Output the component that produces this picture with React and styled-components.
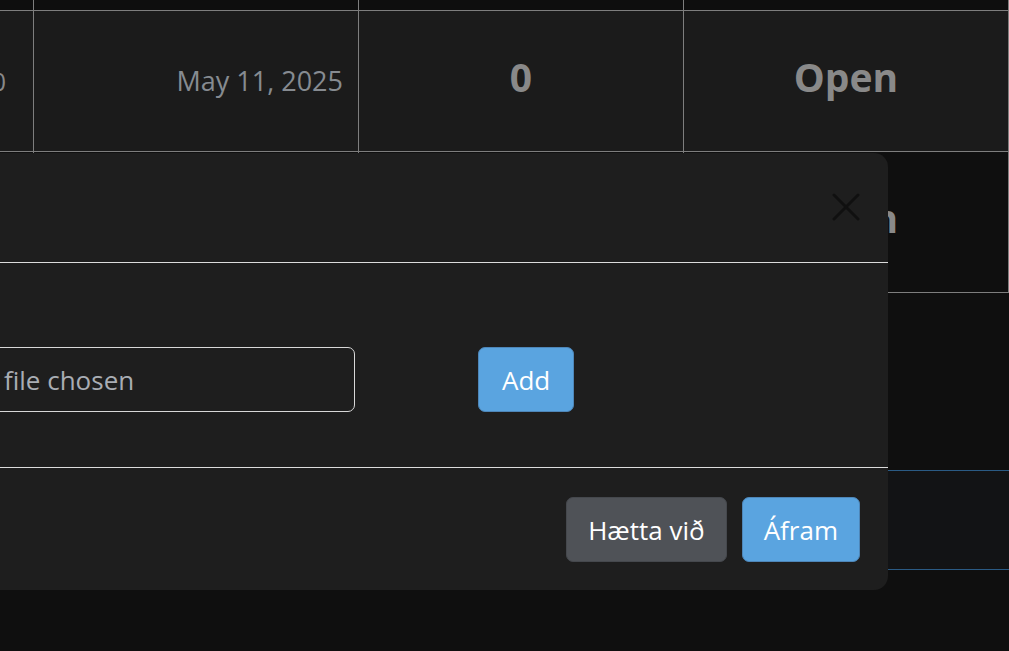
import React from "react";
import styled, { createGlobalStyle } from "styled-components";

const GlobalStyle = createGlobalStyle`
  html, body {
    margin: 0;
    padding: 0;
    background: #0f0f0f;
    overflow: hidden;
  }
  body {
    font-family: "Open Sans", "Noto Sans", "Liberation Sans", sans-serif;
  }
`;

const Page = styled.div`
  position: relative;
  width: 1009px;
  height: 651px;
  overflow: hidden;
  background: #0f0f0f;
`;

const Table = styled.table`
  border-collapse: collapse;
  margin-left: -292px;
  table-layout: fixed;
  width: 1620px;

  td {
    border: 1px solid #7e7e7e;
    width: 324px;
    padding: 0;
  }
`;

const HeadRow = styled.tr`
  height: 10px;
  background: #0e0e0e;
  td {
    border-top: none;
  }
`;

const Row = styled.tr`
  height: 141px;
  background: ${p => (p.$striped ? "#1b1b1b" : "#0f0f0f")};
`;

const Cell = styled.td`
  text-align: ${p => p.$align || "center"};
  vertical-align: middle;
  color: #898989;
  font-size: ${p => (p.$big ? "39px" : "25px")};
  font-weight: ${p => (p.$big ? 700 : 400)};
  padding-right: ${p => p.$padRight || "0px"} !important;
  padding-bottom: ${p => (p.$big ? "6px" : "0px")} !important;
  line-height: 1.2;
`;

const DateText = styled.span`
  color: #868b91;
  font-size: 27px;
  position: relative;
  top: 1px;
`;

const InfoBox = styled.div`
  margin-top: 177px;
  height: 98px;
  border-top: 1px solid #2a5a84;
  border-bottom: 1px solid #2a5a84;
  background: #121315;
`;

const Modal = styled.div`
  position: absolute;
  top: 153px;
  right: 121px;
  width: 1200px;
  background: #1e1e1e;
  border-radius: 14px;
  display: flex;
  flex-direction: column;
`;

const ModalHeader = styled.div`
  height: 109px;
  border-bottom: 1px solid #dcdcdc;
  display: flex;
  align-items: center;
  justify-content: flex-end;
  padding-right: 28px;
`;

const CloseButton = styled.button`
  width: 28px;
  height: 28px;
  padding: 0;
  border: none;
  background: transparent;
  display: flex;
  align-items: center;
  justify-content: center;
  margin-bottom: 2px;
`;

const ModalBody = styled.div`
  height: 205px;
  box-sizing: border-box;
  padding: 84px 0 0 0;
  border-bottom: 1px solid #dcdcdc;
  display: flex;
  align-items: flex-start;
  gap: 123px;
`;

const FileInput = styled.div`
  width: 667px;
  height: 65px;
  box-sizing: border-box;
  border: 1px solid #d8d8d8;
  border-radius: 7px;
  display: flex;
  align-items: center;
  padding-left: 273px;
  font-size: 26px;
  color: #a9adb4;
  overflow: hidden;
  white-space: nowrap;
`;

const Button = styled.button`
  font-family: inherit;
  font-size: 26px;
  line-height: 42px;
  padding: 10.5px ${p => p.$padX || "21px"};
  border-radius: 7px;
  border: 1px solid ${p => (p.$variant === "primary" ? "#4e86b8" : "#45484d")};
  background: ${p => (p.$variant === "primary" ? "#5aa4e0" : "#4f5257")};
  color: #ffffff;
  box-sizing: border-box;
  height: 65px;
  white-space: nowrap;
`;

const ModalFooter = styled.div`
  height: 122px;
  box-sizing: border-box;
  padding: 29px 28px 0 0;
  display: flex;
  justify-content: flex-end;
  align-items: flex-start;
  gap: 15px;
`;

const XIcon = () => (
  <svg width="28" height="28" viewBox="0 0 28 28">
    <path
      d="M2 2 L26 26 M26 2 L2 26"
      stroke="#101010"
      strokeWidth="3"
      strokeLinecap="round"
      fill="none"
    />
  </svg>
);

const App = () => {
  return (
    <>
      <GlobalStyle />
      <Page>
        <Table>
          <tbody>
            <HeadRow>
              <td />
              <td />
              <td />
              <td />
              <td />
            </HeadRow>
            <Row $striped>
              <Cell $align="right" $padRight="27px">1.500.000</Cell>
              <Cell $align="right" $padRight="15px">
                <DateText>May 11, 2025</DateText>
              </Cell>
              <Cell $big>0</Cell>
              <Cell $big>Open</Cell>
              <Cell />
            </Row>
            <Row>
              <Cell $align="right" $padRight="27px">1.500.000</Cell>
              <Cell $align="right" $padRight="15px">
                <DateText>May 11, 2025</DateText>
              </Cell>
              <Cell $big>0</Cell>
              <Cell $big>Open</Cell>
              <Cell />
            </Row>
          </tbody>
        </Table>
        <InfoBox />

        <Modal>
          <ModalHeader>
            <CloseButton aria-label="Close">
              <XIcon />
            </CloseButton>
          </ModalHeader>
          <ModalBody>
            <FileInput>No file chosen</FileInput>
            <Button $variant="primary" $padX="23px">Add</Button>
          </ModalBody>
          <ModalFooter>
            <Button>Hætta við</Button>
            <Button $variant="primary">Áfram</Button>
          </ModalFooter>
        </Modal>
      </Page>
    </>
  );
};

export default App;
